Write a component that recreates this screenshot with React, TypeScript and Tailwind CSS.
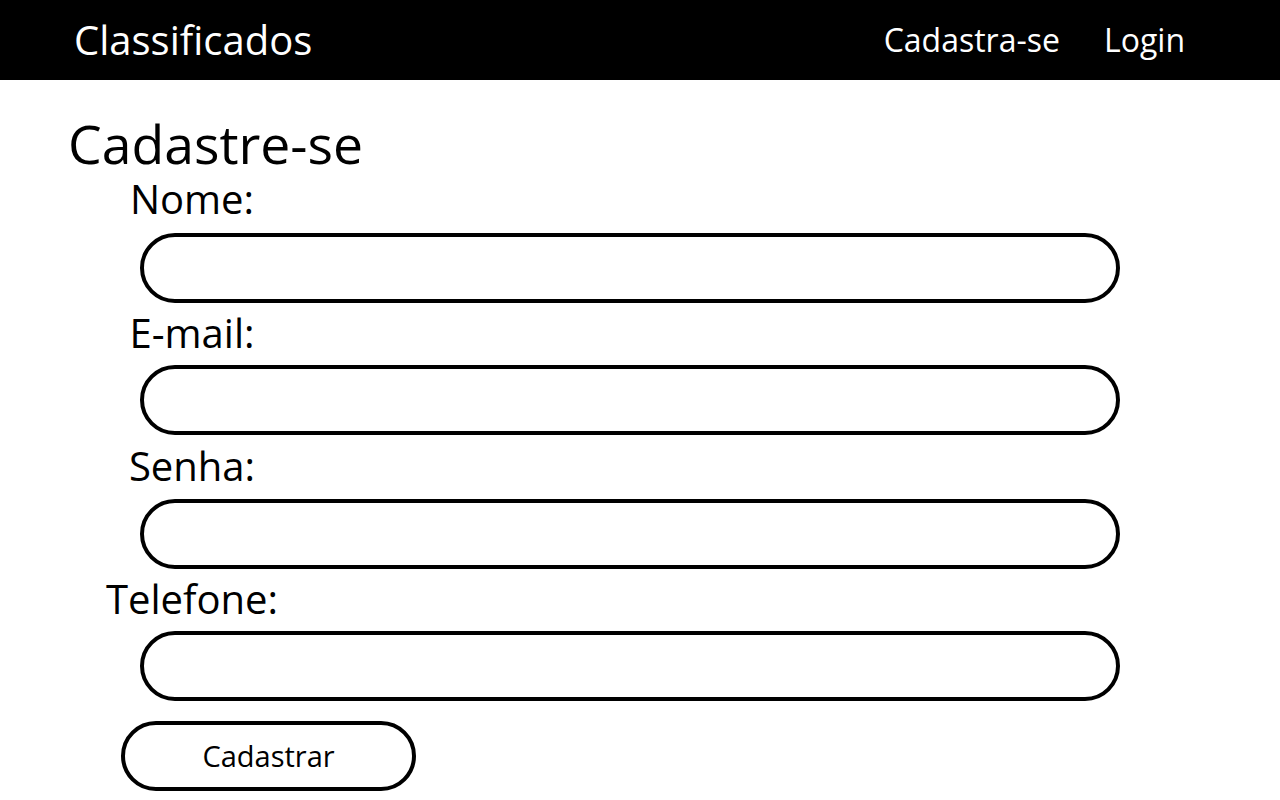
const fields = [
  { label: 'Nome:', type: 'text', mt: 'mt-[7px]', gap: 'mt-[12px]' },
  { label: 'E-mail:', type: 'email', mt: 'mt-[8px]', gap: 'mt-[10px]' },
  { label: 'Senha:', type: 'password', mt: 'mt-[9px]', gap: 'mt-[11px]' },
  { label: 'Telefone:', type: 'tel', mt: 'mt-[8px]', gap: 'mt-[10px]' },
]

export default function App() {
  return (
    <div className="min-h-screen bg-white text-black font-['Open_Sans',sans-serif]">
      <header className="h-20 bg-black flex items-center justify-between pl-[74px] pr-[95px]">
        <span className="text-white text-[40px] leading-none">Classificados</span>
        <nav className="flex items-center gap-[44px] text-white text-[32px] leading-none">
          <a href="#">Cadastra-se</a>
          <a href="#">Login</a>
        </nav>
      </header>

      <main className="pl-[68px] pt-[38px]">
        <h1 className="text-[53.5px] leading-[52px]">Cadastre-se</h1>

        <form className="flex flex-col" onSubmit={e => e.preventDefault()}>
          {fields.map(f => (
            <div key={f.label} className={f.mt}>
              <label className="block w-[248px] text-center text-[40px] leading-[44px]">{f.label}</label>
              <input
                type={f.type}
                className={`${f.gap} ml-[72px] block w-[980px] h-[70px] rounded-full border-4 border-black outline-none px-6`}
              />
            </div>
          ))}
          <button
            type="submit"
            className="mt-[20px] ml-[53px] w-[295px] h-[70px] rounded-full border-4 border-black text-[29px]"
          >
            Cadastrar
          </button>
        </form>
      </main>
    </div>
  )
}
